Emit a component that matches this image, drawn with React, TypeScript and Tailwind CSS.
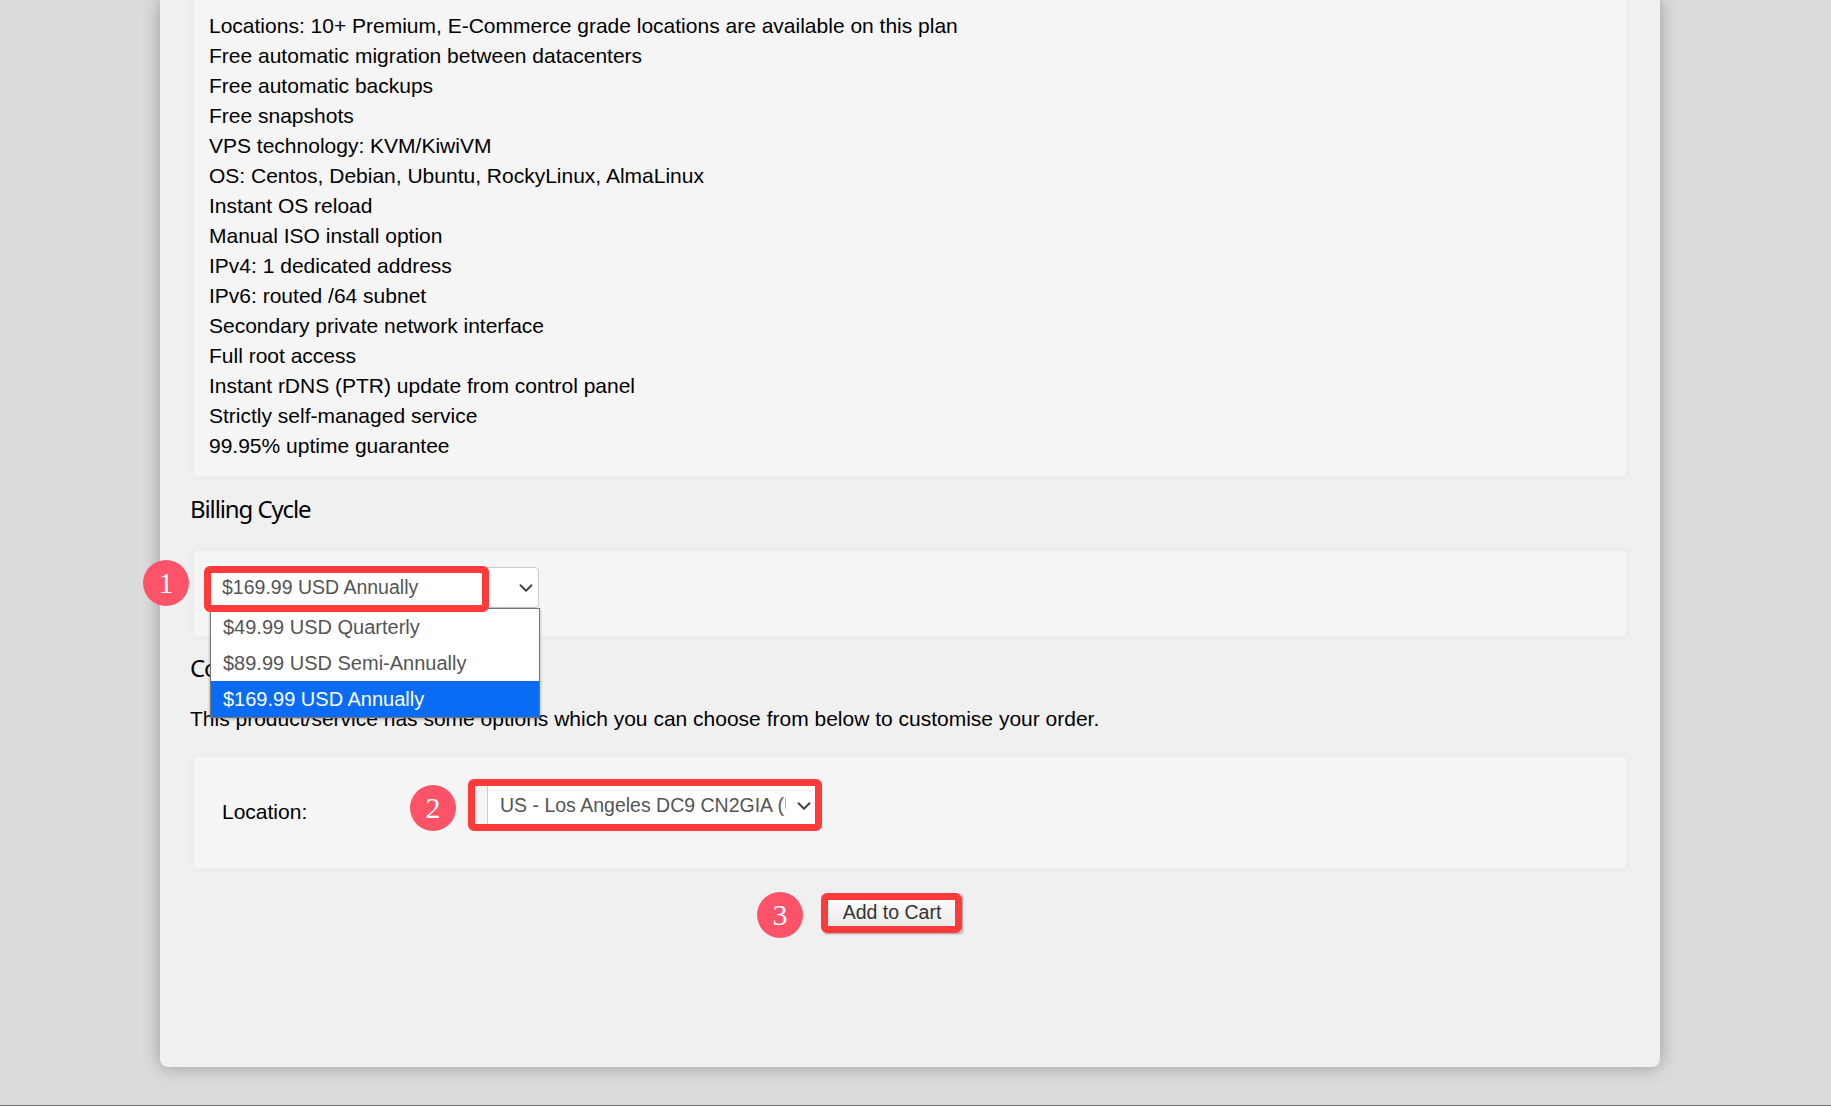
import { ChevronDown } from 'lucide-react'

const features = [
  'Locations: 10+ Premium, E-Commerce grade locations are available on this plan',
  'Free automatic migration between datacenters',
  'Free automatic backups',
  'Free snapshots',
  'VPS technology: KVM/KiwiVM',
  'OS: Centos, Debian, Ubuntu, RockyLinux, AlmaLinux',
  'Instant OS reload',
  'Manual ISO install option',
  'IPv4: 1 dedicated address',
  'IPv6: routed /64 subnet',
  'Secondary private network interface',
  'Full root access',
  'Instant rDNS (PTR) update from control panel',
  'Strictly self-managed service',
  '99.95% uptime guarantee',
]

function Step({ n, className }: { n: number; className: string }) {
  return (
    <div
      className={`absolute flex items-center justify-center rounded-full bg-[#fd5368] pb-[2px] text-white font-['Liberation_Serif',serif] text-[30px] ${className}`}
    >
      {n}
    </div>
  )
}

export default function App() {
  return (
    <div className="relative h-[1106px] overflow-hidden bg-[#dbdbdb] font-['Liberation_Sans',Arial,sans-serif] text-[21px] text-black">
      <div className="relative ml-[160px] h-[1067px] w-[1500px] rounded-b-[8px] bg-[#f0f0f0] px-[30px] shadow-[0_0_18px_rgba(0,0,0,0.3)]">
        {/* Plan features */}
        <div className="rounded-b-[8px] border-x-4 border-b-4 border-[#ededed] bg-[#f5f5f5] pb-[15px] pl-[15px] pt-[11px] leading-[30px]">
          {features.map((f) => (
            <div key={f}>{f}</div>
          ))}
        </div>

        <h2 className="mt-[13px] h-[32px] font-['Noto_Sans',sans-serif] text-[24px] font-normal leading-[32px] tracking-[-1.1px]">
          Billing Cycle
        </h2>

        <div className="mt-[22px] h-[93px] rounded-[8px] border-4 border-[#ededed] bg-[#f5f5f5] pl-[11px] pt-[16px]">
          <div className="flex h-[41px] w-[334px] items-center justify-between rounded-[4px] border border-[#cccccc] bg-white pl-[16px] pr-[1px] text-[19.5px] text-[#555555]">
            <span>$169.99 USD Annually</span>
            <ChevronDown className="h-[22px] w-[22px] text-[#444444]" strokeWidth={2.2} />
          </div>
        </div>

        <h2 className="mt-[12px] h-[32px] font-['Noto_Sans',sans-serif] text-[24px] font-normal leading-[32px] tracking-[-1.1px]">
          Configure Server
        </h2>
        <p className="mt-[20px] leading-[30px]">
          This product/service has some options which you can choose from below to customise your order.
        </p>

        <div className="mt-[19px] flex h-[119px] items-center rounded-[8px] border-4 border-[#ededed] bg-[#f5f5f5] pl-[28px]">
          <span className="mb-[2px] w-[264px] leading-[30px]">Location:</span>
          <div className="mb-[14px] ml-[1px] flex h-[45px] w-[330px] items-center border-l border-[#cccccc] bg-white pl-[12px] text-[19.5px] text-[#555555]">
            <span className="w-[286px] overflow-hidden whitespace-nowrap">US - Los Angeles DC9 CN2GIA (USCA_9)</span>
            <ChevronDown className="ml-[7px] h-[22px] w-[22px] shrink-0 text-[#444444]" strokeWidth={2.2} />
          </div>
        </div>

        <div className="mt-[21px] flex justify-center pr-[36px]">
          <button className="h-[40px] w-[140px] rounded-[4px] bg-linear-to-b from-white to-[#e6e6e6] text-[19.5px] text-[#333333] shadow-[1px_1px_2px_rgba(0,0,0,0.35)]">
            Add to Cart
          </button>
        </div>

        {/* Open select list */}
        <div className="absolute left-[50px] top-[608px] w-[330px] border border-[#767676] bg-white text-[20px] text-[#555555] shadow-[0_1px_3px_rgba(0,0,0,0.3)]">
          <div className="h-[36px] pl-[12px] leading-[36px]">$49.99 USD Quarterly</div>
          <div className="h-[36px] pl-[12px] leading-[36px]">$89.99 USD Semi-Annually</div>
          <div className="h-[36px] bg-[#0a6cf5] pl-[12px] leading-[36px] text-white">$169.99 USD Annually</div>
        </div>

        {/* Annotations */}
        <Step n={1} className="left-[-17px] top-[560px] h-[46px] w-[46px]" />
        <div className="absolute left-[44px] top-[566px] h-[46px] w-[285px] rounded-[6px] border-[7px] border-[#ff3a3a]" />
        <Step n={2} className="left-[250px] top-[785px] h-[46px] w-[46px]" />
        <div className="absolute left-[308px] top-[779px] h-[52px] w-[354px] rounded-[6px] border-[7px] border-[#ff3a3a]" />
        <Step n={3} className="left-[597px] top-[892px] h-[46px] w-[46px]" />
        <div className="absolute left-[661px] top-[893px] h-[40px] w-[141px] rounded-[6px] border-[7px] border-[#ff3a3a]" />
      </div>
      <div className="absolute inset-x-0 bottom-0 h-[1px] bg-[#707070]" />
    </div>
  )
}
